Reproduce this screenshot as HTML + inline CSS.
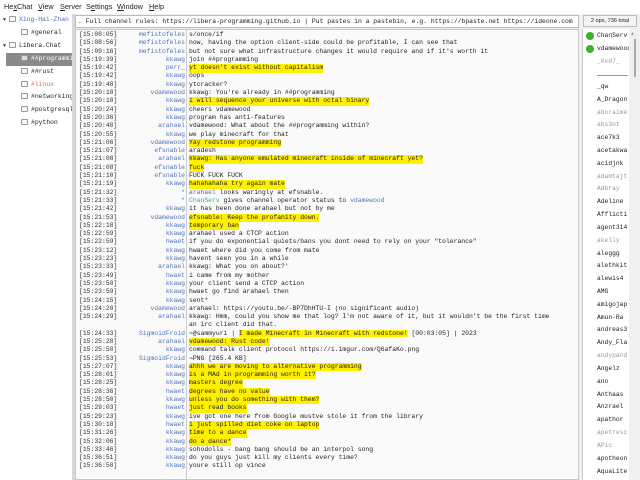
<!DOCTYPE html>
<html><head><meta charset="utf-8">
<style>
*{margin:0;padding:0;box-sizing:border-box}
body{width:640px;height:480px;background:#f0f0f0;position:relative;overflow:hidden;font-family:"Liberation Mono",monospace;color:#222}
.menu{position:absolute;left:0;top:0;width:640px;height:14px;background:#fff;font-family:"Liberation Sans",sans-serif;font-size:7.3px;line-height:13px}
.menu span{position:absolute;top:0}
.tree{position:absolute;left:0;top:14px;width:72px;height:466px;background:#fff;font-size:6.4px}
.tree div{position:absolute;height:12px;line-height:12px;white-space:nowrap;overflow:hidden}
.ico{display:inline-block;width:7px;height:6px;border:1px solid #999;border-radius:1px;vertical-align:-1px;margin-right:3px;background:#f8f8f8}
.vbar{position:absolute;left:72px;top:14px;width:3px;height:466px;background:#d8d8d8}
.topic{position:absolute;left:75px;top:15px;width:504px;height:13px;background:#fff;border:1px solid #bbb;font-size:6.4px;line-height:11px;padding-left:2px;white-space:nowrap;overflow:hidden}
.chat{position:absolute;left:75px;top:29px;width:504px;height:451px;background:#fafafa;border:1px solid #c8c8c8;overflow:hidden;font-size:6.4px}
.sep{position:absolute;left:110px;top:0;width:1px;height:451px;background:#ccc}
.rows{position:absolute;left:0;top:1px;width:504px}
.r{height:8.31px;line-height:8.31px;white-space:nowrap;position:relative}
.t{position:absolute;left:3px;color:#333}
.n{position:absolute;right:395px;color:#4f74b8;text-align:right}
.m{position:absolute;left:113px;color:#222}
.h{background:#ffef00}
.ops{position:absolute;left:583px;top:15px;width:54px;height:12px;background:#f4f4f4;border:1px solid #bbb;font-family:"Liberation Sans",sans-serif;font-size:5.6px;line-height:10px;text-align:center;color:#222}
.ul{position:absolute;left:582px;top:29px;width:47px;height:451px;background:#fff;border-left:1px solid #ccc;font-size:6.3px;overflow:hidden}
.ul div{position:absolute;left:14px;white-space:nowrap}
.g{color:#999}
.dot{position:absolute;left:3px!important;width:8px;height:8px;border-radius:50%;background:#3fae2a}
.sb{position:absolute;left:629px;top:29px;width:11px;height:451px;background:#f0f0f0}
</style></head><body>
<div class="menu"><span style="left:4px">He<u>x</u>Chat</span><span style="left:38px"><u>V</u>iew</span><span style="left:60px"><u>S</u>erver</span><span style="left:86px">S<u>e</u>ttings</span><span style="left:117px"><u>W</u>indow</span><span style="left:149px"><u>H</u>elp</span></div>
<div class="tree">
<div style="left:3px;top:0px;color:#4f74b8"><span style="color:#333;font-size:5px">▼ </span><span class="ico"></span>Xing-Hai-Zhan</div>
<div style="left:21px;top:13px"><span class="ico"></span>#general</div>
<div style="left:3px;top:26px"><span style="color:#333;font-size:5px">▼ </span><span class="ico"></span>Libera.Chat</div>
<div style="left:6px;top:39px;width:66px;background:#8a8a8a;color:#fff;padding-left:15px;height:13px"><span class="ico" style="background:#ddd"></span>##programming</div>
<div style="left:21px;top:52px"><span class="ico"></span>##rust</div>
<div style="left:21px;top:65px;color:#e0702a"><span class="ico"></span>#linux</div>
<div style="left:21px;top:77px"><span class="ico"></span>#networking</div>
<div style="left:21px;top:90px"><span class="ico"></span>#postgresql</div>
<div style="left:21px;top:103px"><span class="ico"></span>#python</div>
</div>
<div class="vbar"></div>
<div class="topic">. Full channel rules: https://libera-programming.github.io | Put pastes in a pastebin, e.g. https://bpaste.net https://ideone.com</div>
<div class="chat"><div class="sep"></div><div class="rows">
<div class="r"><span class="t">[15:08:05]</span><span class="n">mefistofeles</span><span class="m">s/once/if</span></div>
<div class="r"><span class="t">[15:08:56]</span><span class="n">mefistofeles</span><span class="m">now, having the option client-side could be profitable, I can see that</span></div>
<div class="r"><span class="t">[15:09:16]</span><span class="n">mefistofeles</span><span class="m">but not sure what infrastructure changes it would require and if it's worth it</span></div>
<div class="r"><span class="t">[15:19:39]</span><span class="n">kkawg</span><span class="m">join ##programming</span></div>
<div class="r"><span class="t">[15:19:42]</span><span class="n">perr_</span><span class="m h">yt doesn't exist without capitalism</span></div>
<div class="r"><span class="t">[15:19:42]</span><span class="n">kkawg</span><span class="m">oops</span></div>
<div class="r"><span class="t">[15:19:48]</span><span class="n">kkawg</span><span class="m">ytcracker?</span></div>
<div class="r"><span class="t">[15:20:10]</span><span class="n">vdamewood</span><span class="m">kkawg: You're already in ##programming</span></div>
<div class="r"><span class="t">[15:20:10]</span><span class="n">kkawg</span><span class="m h">i will sequence your universe with octal binary</span></div>
<div class="r"><span class="t">[15:20:24]</span><span class="n">kkawg</span><span class="m">cheers vdamewood</span></div>
<div class="r"><span class="t">[15:20:36]</span><span class="n">kkawg</span><span class="m">program has anti-features</span></div>
<div class="r"><span class="t">[15:20:40]</span><span class="n">arahael</span><span class="m">vdamewood: What about the ##programming within?</span></div>
<div class="r"><span class="t">[15:20:55]</span><span class="n">kkawg</span><span class="m">we play minecraft for that</span></div>
<div class="r"><span class="t">[15:21:06]</span><span class="n">vdamewood</span><span class="m h">Yay redstone programming</span></div>
<div class="r"><span class="t">[15:21:07]</span><span class="n">efsnable</span><span class="m">aradesh</span></div>
<div class="r"><span class="t">[15:21:08]</span><span class="n">arahael</span><span class="m h">kkawg: Has anyone emulated minecraft inside of minecraft yet?</span></div>
<div class="r"><span class="t">[15:21:08]</span><span class="n">efsnable</span><span class="m h">fuck</span></div>
<div class="r"><span class="t">[15:21:10]</span><span class="n">efsnable</span><span class="m">FUCK FUCK FUCK</span></div>
<div class="r"><span class="t">[15:21:19]</span><span class="n">kkawg</span><span class="m h">hahahahaha try again mate</span></div>
<div class="r"><span class="t">[15:21:32]</span><span class="n">*</span><span class="m"><span style="color:#4f74b8">arahael</span> looks waringly at efsnable.</span></div>
<div class="r"><span class="t">[15:21:33]</span><span class="n">*</span><span class="m"><span style="color:#3bb08f">ChanServ</span> gives channel operator status to <span style="color:#4f74b8">vdamewood</span></span></div>
<div class="r"><span class="t">[15:21:42]</span><span class="n">kkawg</span><span class="m">it has been done arahael but not by me</span></div>
<div class="r"><span class="t">[15:21:53]</span><span class="n">vdamewood</span><span class="m h">efsnable: Keep the profanity down.</span></div>
<div class="r"><span class="t">[15:22:18]</span><span class="n">kkawg</span><span class="m h">temporary ban</span></div>
<div class="r"><span class="t">[15:22:59]</span><span class="n">kkawg</span><span class="m">arahael used a CTCP action</span></div>
<div class="r"><span class="t">[15:22:59]</span><span class="n">hwaet</span><span class="m">if you do exponential quiets/bans you dont need to rely on your "tolerance"</span></div>
<div class="r"><span class="t">[15:23:12]</span><span class="n">kkawg</span><span class="m">hwaet where did you come from mate</span></div>
<div class="r"><span class="t">[15:23:23]</span><span class="n">kkawg</span><span class="m">havent seen you in a while</span></div>
<div class="r"><span class="t">[15:23:33]</span><span class="n">arahael</span><span class="m">kkawg: What you on about?'</span></div>
<div class="r"><span class="t">[15:23:49]</span><span class="n">hwaet</span><span class="m">i came from my mother</span></div>
<div class="r"><span class="t">[15:23:50]</span><span class="n">kkawg</span><span class="m">your client send a CTCP action</span></div>
<div class="r"><span class="t">[15:23:59]</span><span class="n">kkawg</span><span class="m">hwaet go find arahael then</span></div>
<div class="r"><span class="t">[15:24:15]</span><span class="n">kkawg</span><span class="m">sent*</span></div>
<div class="r"><span class="t">[15:24:20]</span><span class="n">vdamewood</span><span class="m">arahael: https://youtu.be/-BP7DhHTU-I (no significant audio)</span></div>
<div class="r"><span class="t">[15:24:29]</span><span class="n">arahael</span><span class="m">kkawg: Hmm, could you show me that log? I'm not aware of it, but it wouldn't be the first time</span></div>
<div class="r"><span class="m">an irc client did that.</span></div>
<div class="r"><span class="t">[15:24:33]</span><span class="n">SigmoidFroid</span><span class="m">⇒@sammyuri | <span class="h">I made Minecraft in Minecraft with redstone!</span> [00:03:05] | 2023</span></div>
<div class="r"><span class="t">[15:25:28]</span><span class="n">arahael</span><span class="m h">vdamewood: Rust code!</span></div>
<div class="r"><span class="t">[15:25:50]</span><span class="n">kkawg</span><span class="m">command talk client protocol https://i.imgur.com/Q6afaKo.png</span></div>
<div class="r"><span class="t">[15:25:53]</span><span class="n">SigmoidFroid</span><span class="m">⇒PNG [265.4 KB]</span></div>
<div class="r"><span class="t">[15:27:07]</span><span class="n">kkawg</span><span class="m h">ahhh we are moving to alternative programming</span></div>
<div class="r"><span class="t">[15:28:01]</span><span class="n">kkawg</span><span class="m h">is a MAd in programming worth it?</span></div>
<div class="r"><span class="t">[15:28:25]</span><span class="n">kkawg</span><span class="m h">masters degree</span></div>
<div class="r"><span class="t">[15:28:36]</span><span class="n">hwaet</span><span class="m h">degrees have no value</span></div>
<div class="r"><span class="t">[15:28:50]</span><span class="n">kkawg</span><span class="m h">unless you do something with them?</span></div>
<div class="r"><span class="t">[15:29:03]</span><span class="n">hwaet</span><span class="m h">just read books</span></div>
<div class="r"><span class="t">[15:29:23]</span><span class="n">kkawg</span><span class="m">ive got one here from Google mustve stole it from the library</span></div>
<div class="r"><span class="t">[15:30:18]</span><span class="n">hwaet</span><span class="m h">i just spilled diet coke on laptop</span></div>
<div class="r"><span class="t">[15:31:26]</span><span class="n">kkawg</span><span class="m h">time to a dance</span></div>
<div class="r"><span class="t">[15:32:06]</span><span class="n">kkawg</span><span class="m h">do a dance*</span></div>
<div class="r"><span class="t">[15:33:46]</span><span class="n">kkawg</span><span class="m">sohodolls - bang bang should be an interpol song</span></div>
<div class="r"><span class="t">[15:36:51]</span><span class="n">kkawg</span><span class="m">do you guys just kill my clients every time?</span></div>
<div class="r"><span class="t">[15:36:58]</span><span class="n">kkawg</span><span class="m">youre still op vince</span></div>
</div></div>
<div class="ops">2 ops, 736 total</div>
<div class="ul">
<span class="dot" style="top:3px"></span><div style="top:3px">ChanServ</div>
<span class="dot" style="top:16px"></span><div style="top:16px">vdamewood</div>
<div class="g" style="top:29px">_0x07_</div>
<div style="top:46px;width:31px;height:1px;background:#999"></div>
<div style="top:54px">_qw</div>
<div style="top:67px">A_Dragon</div>
<div class="g" style="top:80px">aboraime</div>
<div class="g" style="top:92px">abs3nt</div>
<div style="top:105px">ace7k3</div>
<div style="top:118px">acetakwa</div>
<div style="top:131px">acidjnk</div>
<div class="g" style="top:144px">adamtajt</div>
<div class="g" style="top:156px">Adbray</div>
<div style="top:169px">Adeline</div>
<div style="top:182px">Afflicti</div>
<div style="top:195px">agent314</div>
<div class="g" style="top:208px">akelly</div>
<div style="top:221px">aleggg</div>
<div style="top:233px">alethkit</div>
<div style="top:246px">alewis4</div>
<div style="top:259px">AMG</div>
<div style="top:272px">amigojap</div>
<div style="top:285px">Amun-Ra</div>
<div style="top:297px">andreas3</div>
<div style="top:310px">Andy_Fla</div>
<div class="g" style="top:323px">andypand</div>
<div style="top:336px">Angelz</div>
<div style="top:349px">ano</div>
<div style="top:362px">Anthaas</div>
<div style="top:374px">Anzrael</div>
<div style="top:387px">apathor</div>
<div class="g" style="top:400px">apetresc</div>
<div class="g" style="top:413px">APic</div>
<div style="top:426px">apotheon</div>
<div style="top:439px">AquaLite</div>
</div>
<div class="sb"><div style="position:absolute;left:2px;top:2px;font-size:5px;color:#999">▲</div><div style="position:absolute;left:5px;top:10px;width:2px;height:38px;background:#aaa"></div></div>
</body></html>
